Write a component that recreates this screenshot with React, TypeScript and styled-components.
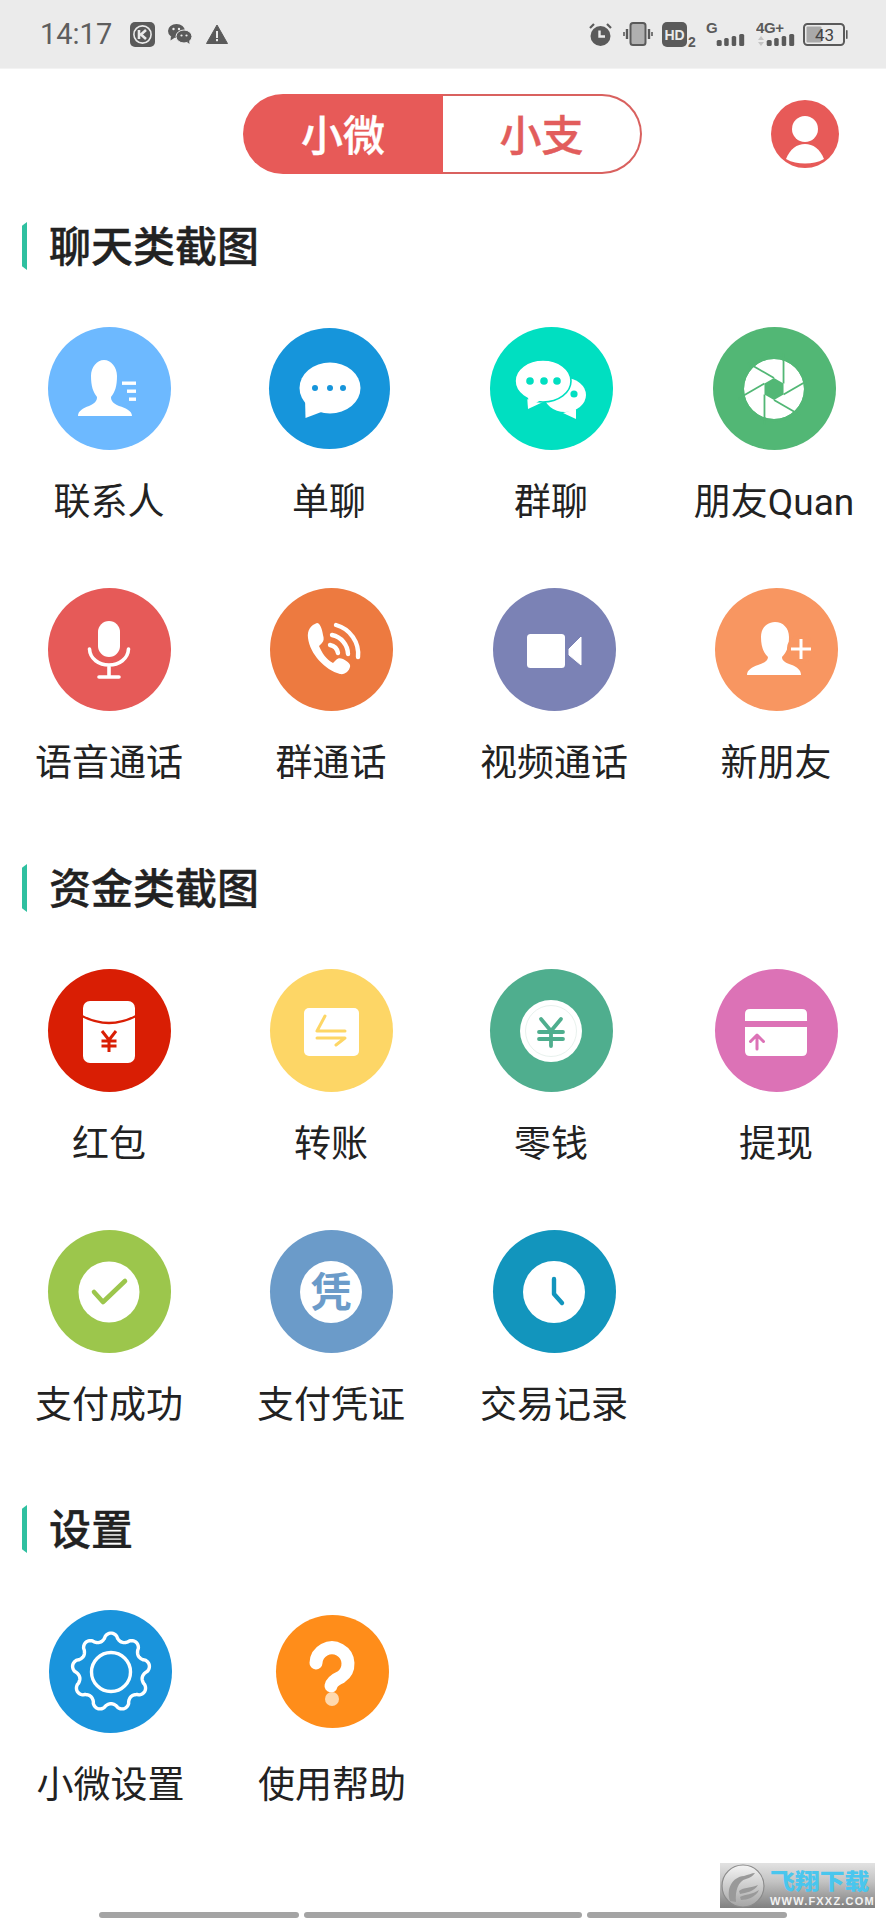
import React from "react";
import styled, { createGlobalStyle } from "styled-components";

const Global = createGlobalStyle`
  html, body { margin: 0; padding: 0; background: #fff; }
  body { overflow-x: hidden; }
`;

const CJK = `Roboto, "Noto Sans CJK SC", sans-serif`;

const Page = styled.div`
  position: relative;
  width: 886px;
  height: 1920px;
  overflow: hidden;
  display: flex;
  flex-direction: column;
  background: #fff;
  font-family: ${CJK};
  color: #222;
`;

const StatusBar = styled.div`
  height: 68px;
  flex: none;
  display: flex;
  align-items: center;
  padding: 0 38px 0 40px;
  background: #ebebeb;
  border-bottom: 1px solid #f3f3f3;
  color: #5e5e5e;
`;
const Time = styled.span`
  font-size: 29px;
  line-height: 68px;
  width: 90px;
  flex: none;
`;
const StatusLeft = styled.div`
  display: flex;
  align-items: center;
  gap: 13px;
`;
const StatusRight = styled.div`
  margin-left: auto;
  display: flex;
  align-items: center;
  gap: 8px;
`;
const StatusGlyph = styled.svg<{ $ml?: number }>`
  flex: none;
  margin-left: ${(p) => p.$ml ?? 0}px;
`;

const TopBar = styled.div`
  display: flex;
  align-items: center;
  padding: 25px 0 0 243px;
`;
const Toggle = styled.div`
  display: flex;
  height: 80px;
  width: 399px;
`;
const ToggleItem = styled.div<{ $on?: boolean }>`
  flex: ${(p) => (p.$on ? "0 0 200px" : "1")};
  display: flex;
  align-items: center;
  justify-content: center;
  padding-bottom: 3px;
  box-sizing: border-box;
  font-size: 42px;
  font-weight: 500;
  -webkit-text-stroke: 0.4px currentColor;
  background: ${(p) => (p.$on ? "#e75a58" : "#fff")};
  color: ${(p) => (p.$on ? "#fff" : "#e25d5c")};
  border: ${(p) => (p.$on ? "none" : "2.5px solid #d9615f")};
  border-left: none;
  border-radius: ${(p) => (p.$on ? "40px 0 0 40px" : "0 40px 40px 0")};
`;
const Avatar = styled.svg`
  width: 68px;
  height: 68px;
  margin-left: 129px;
  flex: none;
`;

const SectionHead = styled.div<{ $mt: number }>`
  display: flex;
  align-items: center;
  height: 48px;
  margin-top: ${(p) => p.$mt}px;
  padding-left: 22px;
`;
const HeadBar = styled.div`
  width: 5px;
  height: 48px;
  background: #2fc0a0;
  clip-path: polygon(100% 0, 100% 100%, 0 92%, 0 8%);
`;
const HeadTitle = styled.h2`
  margin: 4px 0 0 22px;
  font-size: 42px;
  line-height: 48px;
  font-weight: 500;
  -webkit-text-stroke: 0.4px #222;
  color: #222;
`;

const Row = styled.div<{ $cols: string; $mt: number }>`
  display: grid;
  grid-template-columns: ${(p) => p.$cols};
  margin-top: ${(p) => p.$mt}px;
`;
const Cell = styled.div`
  display: flex;
  flex-direction: column;
  align-items: center;
`;
const IconSlot = styled.div`
  height: 123px;
  display: flex;
  align-items: center;
  justify-content: center;
`;
const Disc = styled.div<{ $bg: string; $size?: number }>`
  width: ${(p) => p.$size ?? 123}px;
  height: ${(p) => p.$size ?? 123}px;
  border-radius: 50%;
  background: ${(p) => p.$bg};
  display: flex;
  align-items: center;
  justify-content: center;
`;
const Glyph = styled.svg`
  width: 100px;
  height: 100px;
  flex: none;
`;
const Label = styled.div`
  margin-top: 28px;
  height: 47px;
  line-height: 50px;
  font-size: 37px;
  white-space: nowrap;
  color: #222;
`;

const BottomBars = styled.div`
  margin-top: auto;
  display: flex;
  gap: 5px;
  padding: 0 0 2px 99px;
`;
const ScrollBar = styled.div<{ $w: number }>`
  width: ${(p) => p.$w}px;
  height: 6px;
  border-radius: 3px;
  background: #a4a4a4;
`;

const Watermark = styled.div`
  position: absolute;
  left: 720px;
  top: 1863px;
  width: 155px;
  height: 45px;
  background: linear-gradient(#e2e2e2, #c4c4c4 40%, #808080);
  display: flex;
  align-items: center;
`;
const WmLogo = styled.svg`
  width: 48px;
  height: 45px;
  flex: none;
`;
const WmText = styled.div`
  display: flex;
  flex-direction: column;
  margin-left: 2px;
`;
const WmTitle = styled.div`
  font-size: 22px;
  line-height: 32px;
  height: 32px;
  font-weight: 900;
  color: #49c6ee;
  font-family: "Noto Sans CJK SC", sans-serif;
  transform: scaleX(1.13);
  transform-origin: left center;
  white-space: nowrap;
`;
const WmUrl = styled.div`
  font-size: 11px;
  line-height: 13px;
  height: 13px;
  font-weight: 700;
  letter-spacing: 1.2px;
  color: #f2f2f2;
  font-family: "Liberation Sans", sans-serif;
  white-space: nowrap;
`;

const V = "-50 -50 100 100";

const gearPath = (() => {
  const pts: string[] = [];
  for (let i = 0; i <= 270; i++) {
    const t = (i / 270) * Math.PI * 2;
    const c = Math.cos(9 * t);
    const r = 35.3 + 3.6 * Math.sign(c) * Math.pow(Math.abs(c), 0.7);
    const a = t - Math.PI / 2;
    pts.push(`${(r * Math.cos(a)).toFixed(2)} ${(r * Math.sin(a)).toFixed(2)}`);
  }
  return "M" + pts.join("L") + "Z";
})();

const apertureLines = (() => {
  const out: { x1: number; y1: number; x2: number; y2: number }[] = [];
  for (let k = 0; k < 6; k++) {
    const a = ((k * 60 + 210) * Math.PI) / 180;
    const x1 = 11 * Math.cos(a);
    const y1 = 11 * Math.sin(a);
    const d = a + (2 * Math.PI) / 3;
    const dx = -Math.cos(d);
    const dy = -Math.sin(d);
    out.push({ x1, y1, x2: x1 + dx * 30, y2: y1 + dy * 30 });
  }
  return out;
})();

const hexPoints = Array.from({ length: 6 }, (_, k) => {
  const a = ((k * 60 + 210) * Math.PI) / 180;
  return `${(11 * Math.cos(a)).toFixed(2)},${(11 * Math.sin(a)).toFixed(2)}`;
}).join(" ");

const icons: Record<string, (c: string) => React.ReactNode> = {
  contact: () => (
    <g fill="#fff">
      <path d="M-31 27 C-31 22 -26 19 -20 17 C-14 14 -12 12 -12 8 C-16 3 -18 -3 -18 -13 C-18 -22 -12 -29 -5 -29 C2 -29 8 -22 8 -13 C8 -3 6 3 2 8 C2 12 4 14 10 17 C17 19 23 22 23 27 Z" />
      <rect x="13" y="-7.5" width="14" height="3.4" />
      <rect x="18" y="0.5" width="9" height="3.4" />
      <rect x="20" y="8.5" width="7" height="3.4" />
    </g>
  ),
  chat: (c) => (
    <g>
      <path fill="#fff" d="M-24 8 L-23.5 29 L-5 22 Z" />
      <ellipse cx="1" cy="-1" rx="30.5" ry="25.5" fill="#fff" />
      <circle cx="-14" cy="-1" r="3" fill={c} />
      <circle cx="1" cy="-1" r="3" fill={c} />
      <circle cx="14" cy="-1" r="3" fill={c} />
    </g>
  ),
  group: (c) => (
    <g>
      <path fill="#fff" d="M12 24 L25 30 L25 20 Z" />
      <ellipse cx="14" cy="6" rx="21" ry="17" fill="#fff" />
      <circle cx="23" cy="5" r="3.6" fill={c} />
      <path fill="#fff" d="M-24 6 L-23 20 L-8 13 Z" />
      <ellipse cx="-8" cy="-8" rx="28" ry="21" fill="#fff" stroke={c} strokeWidth="1.6" />
      <path fill="#fff" d="M-23 4 L-22.5 18 L-10 11 Z" />
      <circle cx="-21" cy="-8" r="3.8" fill={c} />
      <circle cx="-7" cy="-8" r="3.8" fill={c} />
      <circle cx="6" cy="-8" r="3.8" fill={c} />
    </g>
  ),
  aperture: (c) => (
    <g>
      <circle r="30" fill="#fff" />
      <polygon points={hexPoints} fill={c} />
      {apertureLines.map((l, i) => (
        <line key={i} {...l} stroke={c} strokeWidth="1.8" />
      ))}
      <circle r="31.5" fill="none" stroke={c} strokeWidth="3" />
    </g>
  ),
  mic: () => (
    <g>
      <rect x="-11" y="-29" width="22" height="36" rx="11" fill="#fff" />
      <path d="M-19.5 -1 C-19 9 -10 15 0 15 C10 15 19 9 19.5 -1 M0 15 V27 M-10 27 H10" fill="none" stroke="#fff" strokeWidth="3.6" strokeLinecap="round" />
    </g>
  ),
  phone: () => (
    <g>
      <path fill="#fff" d="M-14 -27 C-20 -25 -24 -20 -23 -12 C-21 4 -6 20 9 24 C14 25 18 21 19 17 C20 14 17 12 12 9 C9 8 7 8 5 10 L2 13 C-5 9 -9 3 -12 -4 L-9 -7 C-7 -9 -7 -12 -8 -15 C-9 -21 -11 -27 -14 -27 Z" />
      <path d="M5 -25 A30 30 0 0 1 27 7 M1 -15 A20 20 0 0 1 17 4 M-1 -5 A10 10 0 0 1 7 3" fill="none" stroke="#fff" strokeWidth="4.4" strokeLinecap="round" />
    </g>
  ),
  video: () => (
    <g fill="#fff">
      <rect x="-27" y="-16" width="38" height="34" rx="3.5" />
      <path d="M15 -1 L27 -13 V15 L15 5 Z" strokeLinejoin="round" stroke="#fff" strokeWidth="1" />
    </g>
  ),
  add: (c) => (
    <g>
      <path fill="#fff" d="M-29 25 C-29 20 -24 17 -18 15 C-12 13 -8 11 -8 7 C-13 2 -15 -4 -15 -13 C-15 -22 -9 -28 -1 -28 C7 -28 13 -22 13 -13 C13 -4 11 2 6 7 C6 11 10 13 16 15 C21 17 25 20 25 25 Z" />
      <circle cx="25" cy="-1" r="14" fill={c} />
      <path d="M15 -1 H35 M25 -11 V9" stroke="#fff" strokeWidth="3" />
    </g>
  ),
  packet: (c) => (
    <g>
      <rect x="-26" y="-30" width="52" height="62" rx="7" fill="#fff" />
      <path d="M-27 -15 Q0 -1 27 -15" fill="none" stroke={c} strokeWidth="2.4" />
      <path d="M-7 0 L0 9 L7 0 M-7.5 10 H7.5 M-7.5 15 H7.5 M0 9 V21" fill="none" stroke={c} strokeWidth="3" />
    </g>
  ),
  transfer: (c) => (
    <g>
      <rect x="-27" y="-23" width="55" height="48" rx="5" fill="#fff" />
      <path d="M-6 -15 L-14 0 H14 M-14 7 H14 L5 14" fill="none" stroke={c} strokeWidth="3" strokeLinecap="round" strokeLinejoin="round" />
    </g>
  ),
  coin: (c) => (
    <g>
      <circle r="31" fill="#fff" />
      <circle r="25.5" fill="none" stroke="#e2eee9" strokeWidth="0.8" />
      <path d="M-10 -12 L0 0 L10 -12 M-12 1 H12 M-12 8 H12 M0 0 V15" fill="none" stroke={c} strokeWidth="3.8" strokeLinecap="round" />
    </g>
  ),
  card: (c) => (
    <g>
      <path fill="#fff" d="M-31 -10 V-17 Q-31 -22 -26 -22 H26 Q31 -22 31 -17 V-10 Z" />
      <path fill="#fff" d="M-31 -4 H31 V20 Q31 25 26 25 H-26 Q-31 25 -31 20 Z" />
      <path d="M-19 18 V5 M-25.5 10.5 L-19 4 L-12.5 10.5" fill="none" stroke={c} strokeWidth="3" strokeLinecap="round" strokeLinejoin="round" />
    </g>
  ),
  check: (c) => (
    <g>
      <circle r="30.5" fill="#fff" />
      <path d="M-15 0 L-6 10 L16 -11" fill="none" stroke={c} strokeWidth="4.6" strokeLinecap="round" strokeLinejoin="round" />
    </g>
  ),
  voucher: (c) => (
    <g>
      <circle r="31" fill="#fff" />
      <text x="0" y="15" textAnchor="middle" fontSize="41" fontWeight="700" fontFamily={`"Noto Sans CJK SC", sans-serif`} fill={c}>
        凭
      </text>
    </g>
  ),
  clock: (c) => (
    <g>
      <circle r="31" fill="#fff" />
      <path d="M0 -13 V2 L8 11" fill="none" stroke={c} strokeWidth="4.4" strokeLinecap="round" strokeLinejoin="round" />
    </g>
  ),
  gear: () => (
    <g fill="none" stroke="#fff" strokeWidth="3.4">
      <path d={gearPath} strokeLinejoin="round" />
      <circle r="19.5" />
    </g>
  ),
  help: () => (
    <g>
      <path d="M-16 -9 A16 16 0 1 1 9 5 Q0 9 -1 14" fill="none" stroke="#fff" strokeWidth="13" strokeLinecap="round" />
      <circle cx="0" cy="27" r="7" fill="#ffd9ae" />
    </g>
  ),
};

type Item = { label: string; icon: string; bg: string; size?: number };

const Tile = ({ item }: { item: Item }) => (
  <Cell>
    <IconSlot>
      <Disc $bg={item.bg} $size={item.size}>
        <Glyph viewBox={V}>{icons[item.icon](item.bg)}</Glyph>
      </Disc>
    </IconSlot>
    <Label>{item.label}</Label>
  </Cell>
);

const rows: Record<string, Item[]> = {
  a: [
    { label: "联系人", icon: "contact", bg: "#6db9ff" },
    { label: "单聊", icon: "chat", bg: "#1695db", size: 121 },
    { label: "群聊", icon: "group", bg: "#00dfc1" },
    { label: "朋友Quan", icon: "aperture", bg: "#52b775" },
  ],
  b: [
    { label: "语音通话", icon: "mic", bg: "#e65a58" },
    { label: "群通话", icon: "phone", bg: "#ed7a40" },
    { label: "视频通话", icon: "video", bg: "#7b82b5" },
    { label: "新朋友", icon: "add", bg: "#f89661" },
  ],
  c: [
    { label: "红包", icon: "packet", bg: "#d91e04" },
    { label: "转账", icon: "transfer", bg: "#fdd666" },
    { label: "零钱", icon: "coin", bg: "#4fae8e" },
    { label: "提现", icon: "card", bg: "#dc72b6" },
  ],
  d: [
    { label: "支付成功", icon: "check", bg: "#9cc64c" },
    { label: "支付凭证", icon: "voucher", bg: "#6b9bc9" },
    { label: "交易记录", icon: "clock", bg: "#1295bd" },
  ],
  e: [
    { label: "小微设置", icon: "gear", bg: "#1a94dc" },
    { label: "使用帮助", icon: "help", bg: "#ff8d1a", size: 113 },
  ],
};

const DK = "#5a5a5a";
const boldFont = `"Liberation Sans", sans-serif`;

const Bars = ({ x }: { x: number }) => (
  <g fill={DK}>
    <rect x={x} y="8" width="5" height="6" rx="1.5" />
    <rect x={x + 7.5} y="6" width="4.5" height="8" rx="1.5" />
    <rect x={x + 15} y="4" width="4.5" height="10" rx="1.5" />
    <rect x={x + 22.5} y="2" width="5" height="12" rx="1.5" />
  </g>
);

export default function App() {
  return (
    <Page>
      <Global />
      <StatusBar>
        <Time>14:17</Time>
        <StatusLeft>
          <StatusGlyph width="25" height="25" viewBox="0 0 25 25">
            <rect width="25" height="25" rx="5" fill={DK} />
            <circle cx="12.5" cy="12.5" r="8.6" fill="none" stroke="#ebebeb" strokeWidth="1.6" />
            <path d="M9 8 V17 M16 8 L11 12.5 L16 17" fill="none" stroke="#ebebeb" strokeWidth="2.6" />
          </StatusGlyph>
          <StatusGlyph width="24" height="20" viewBox="0 0 24 20">
            <ellipse cx="8.5" cy="7" rx="8.5" ry="7" fill={DK} />
            <ellipse cx="16" cy="12.5" rx="8" ry="6.5" fill={DK} stroke="#ebebeb" strokeWidth="1" />
            <circle cx="5.5" cy="5" r="1.2" fill="#ebebeb" />
            <circle cx="11" cy="5" r="1.2" fill="#ebebeb" />
            <circle cx="13.5" cy="11.5" r="1.1" fill="#ebebeb" />
            <circle cx="18.5" cy="11.5" r="1.1" fill="#ebebeb" />
            <path d="M3 12 L2.5 16.5 L7 13.5 Z" fill={DK} />
            <path d="M19 18 L21.5 20 L21 16 Z" fill={DK} />
          </StatusGlyph>
          <StatusGlyph width="22" height="20" viewBox="0 0 22 20" $ml={1}>
            <path d="M11 1 L21.5 19.5 H0.5 Z" fill={DK} strokeLinejoin="round" stroke={DK} />
            <rect x="10" y="7" width="2" height="7" fill="#ebebeb" />
            <rect x="10" y="15" width="2" height="2.2" fill="#ebebeb" />
          </StatusGlyph>
        </StatusLeft>
        <StatusRight>
          <StatusGlyph width="25" height="25" viewBox="0 0 25 25">
            <circle cx="12.5" cy="14" r="10" fill={DK} />
            <path d="M2 6 L6 2 M23 6 L19 2" stroke={DK} strokeWidth="2.2" />
            <path d="M11.5 8.5 V14.5 H17" fill="none" stroke="#ebebeb" strokeWidth="2.4" />
          </StatusGlyph>
          <StatusGlyph width="30" height="24" viewBox="0 0 30 24" $ml={2}>
            <rect x="7.5" y="1" width="15" height="22" rx="2.5" fill="#b0b0b0" stroke={DK} strokeWidth="2" />
            <path d="M4 7 V17 M26 7 V17" stroke={DK} strokeWidth="2.4" />
            <path d="M1 10 V14 M29 10 V14" stroke={DK} strokeWidth="1.6" />
          </StatusGlyph>
          <StatusGlyph width="36" height="35" viewBox="0 -4 36 35" $ml={1}>
            <rect y="1" width="25" height="25" rx="5" fill={DK} />
            <text x="12.5" y="18.5" textAnchor="middle" fontSize="14" fontWeight="700" fontFamily={boldFont} fill="#ebebeb">HD</text>
            <text x="26" y="26" fontSize="14" fontWeight="700" fontFamily={boldFont} fill={DK}>2</text>
          </StatusGlyph>
          <StatusGlyph width="39" height="34" viewBox="0 -4 39 34">
            <text x="0" y="12" fontSize="15" fontWeight="700" fontFamily={boldFont} fill={DK}>G</text>
            <g transform="translate(0 11)"><Bars x={10.7} /></g>
          </StatusGlyph>
          <StatusGlyph width="39" height="34" viewBox="0 -4 39 34" $ml={3}>
            <text x="0" y="12" fontSize="15" fontWeight="700" fontFamily={boldFont} fill={DK} letterSpacing="-0.4">4G+</text>
            <path d="M2 19 L5 15 L8 19 Z M2 21 H8 L5 25 Z" fill="#c4c4c4" />
            <g transform="translate(0 11)"><Bars x={10.7} /></g>
          </StatusGlyph>
          <StatusGlyph width="45" height="23" viewBox="0 0 45 23">
            <rect x="1" y="1" width="40" height="21" rx="3.5" fill="none" stroke={DK} strokeWidth="2" />
            <rect x="3.5" y="3.5" width="15" height="16" rx="1" fill="#a9a9a9" />
            <text x="21.5" y="18" textAnchor="middle" fontSize="17" fontFamily={`Roboto, sans-serif`} fill="#444">43</text>
            <rect x="43" y="7" width="1.6" height="9" rx="0.8" fill={DK} />
          </StatusGlyph>
        </StatusRight>
      </StatusBar>

      <TopBar>
        <Toggle>
          <ToggleItem $on>小微</ToggleItem>
          <ToggleItem>小支</ToggleItem>
        </Toggle>
        <Avatar viewBox="-34 -34 68 68">
          <circle r="34" fill="#e75a58" />
          <circle cx="0" cy="-5" r="13" fill="#fff" />
          <path d="M-19 25 C-15 15 -8 10 0 10 C8 10 15 15 19 25 C13 28.5 7 29.5 0 29.5 C-7 29.5 -13 28.5 -19 25 Z" fill="#fff" />
        </Avatar>
      </TopBar>

      <SectionHead $mt={48}>
        <HeadBar />
        <HeadTitle>聊天类截图</HeadTitle>
      </SectionHead>
      <Row $cols="218px 222px 222px 224px" $mt={57}>
        {rows.a.map((it) => <Tile key={it.label} item={it} />)}
      </Row>
      <Row $cols="218px 226px 220px 224px" $mt={63}>
        {rows.b.map((it) => <Tile key={it.label} item={it} />)}
      </Row>

      <SectionHead $mt={78}>
        <HeadBar />
        <HeadTitle>资金类截图</HeadTitle>
      </SectionHead>
      <Row $cols="218px 226px 214px 236px" $mt={57}>
        {rows.c.map((it) => <Tile key={it.label} item={it} />)}
      </Row>
      <Row $cols="218px 226px 220px" $mt={63}>
        {rows.d.map((it) => <Tile key={it.label} item={it} />)}
      </Row>

      <SectionHead $mt={77}>
        <HeadBar />
        <HeadTitle>设置</HeadTitle>
      </SectionHead>
      <Row $cols="221px 222px" $mt={57}>
        {rows.e.map((it) => <Tile key={it.label} item={it} />)}
      </Row>

      <BottomBars>
        <ScrollBar $w={200} />
        <ScrollBar $w={278} />
        <ScrollBar $w={200} />
      </BottomBars>

      <Watermark>
        <WmLogo viewBox="0 0 48 45">
          <defs>
            <linearGradient id="wmc" x1="0" y1="0" x2="0" y2="1">
              <stop offset="0" stopColor="#f4f4f4" />
              <stop offset="1" stopColor="#a5a5a5" />
            </linearGradient>
          </defs>
          <circle cx="23" cy="23" r="21" fill="url(#wmc)" stroke="#8b8b8b" strokeWidth="1.2" />
          <path d="M10 38 C6 26 12 14 24 13 C28 12 32 10 35 10 C33 13 30 15 26 16 C18 18 15 28 16 39 Z" fill="#999" />
          <path d="M19 28 C24 24 31 25 38 22 C35 28 26 30 20 31 Z M20 34 C26 31 32 32 39 27 C36 34 27 37 21 37 Z" fill="#999" />
        </WmLogo>
        <WmText>
          <WmTitle>飞翔下载</WmTitle>
          <WmUrl>WWW.FXXZ.COM</WmUrl>
        </WmText>
      </Watermark>
    </Page>
  );
}
